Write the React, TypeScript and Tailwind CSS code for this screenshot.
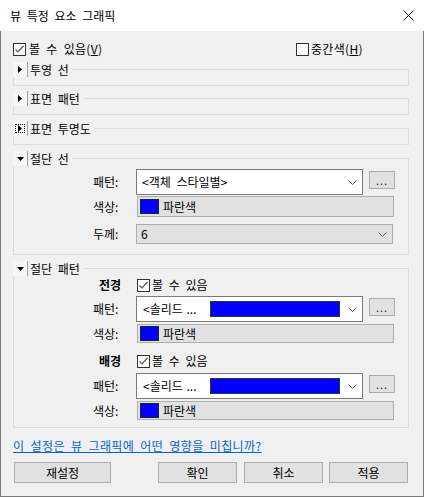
import React from "react";

function Check({ checked }: { checked: boolean }) {
  return (
    <span className="w-[13px] h-[13px] shrink-0 border border-[#333333] bg-white flex items-center justify-center">
      {checked && (
        <svg width="11" height="11" viewBox="0 0 11 11">
          <path d="M1.5 5.5 L4 8 L9.5 2" stroke="#555555" strokeWidth="1.2" fill="none" />
        </svg>
      )}
    </span>
  );
}

function Toggle({ open, focus }: { open: boolean; focus?: boolean }) {
  return (
    <span className="w-[15px] h-[15px] shrink-0 bg-[#f6f6f6] border-r border-[#a0a0a0] flex items-center justify-center relative">
      {focus && <span className="absolute left-[2px] top-[3px] w-[10px] h-[9px] border border-dotted border-black" />}
      {open ? (
        <svg width="7" height="4" viewBox="0 0 7 4">
          <path d="M0 0 L7 0 L3.5 4 Z" fill="#000" />
        </svg>
      ) : (
        <svg width="4" height="7" viewBox="0 0 4 7">
          <path d="M0 0 L4 3.5 L0 7 Z" fill="#000" />
        </svg>
      )}
    </span>
  );
}

function Group({
  title,
  open,
  focus,
  className,
  children,
}: {
  title: string;
  open: boolean;
  focus?: boolean;
  className: string;
  children?: React.ReactNode;
}) {
  return (
    <div className={"relative border border-[#dcdcdc] " + className}>
      <div className="absolute left-[-1px] top-[-8px] flex items-center bg-[#f0f0f0] pr-[3px] h-[15px]">
        <Toggle open={open} focus={focus} />
        <span className="ml-[2px] leading-[15px]">{title}</span>
      </div>
      {children}
    </div>
  );
}

function Chevron() {
  return (
    <svg width="9" height="5" viewBox="0 0 9 5" className="shrink-0">
      <path d="M0.5 0.5 L4.5 4.5 L8.5 0.5" stroke="#606060" strokeWidth="1" fill="none" />
    </svg>
  );
}

function DotsButton() {
  return (
    <div className="ml-[6px] self-start mt-[2px] w-[26px] h-[18px] border border-[#adadad] bg-[#e1e1e1] flex items-center justify-center">
      <span className="text-[11px] leading-none tracking-[1px] text-[#222]">...</span>
    </div>
  );
}

function Swatch() {
  return <span className="w-[19px] h-[15px] border border-[#222] bg-[#0000ff] shrink-0" />;
}

function LabelledColor({ className }: { className: string }) {
  return (
    <div className={"flex items-center " + className}>
      <span className="w-[122px] pl-[79px]">색상:</span>
      <div className="ml-[1px] w-[257px] h-full border border-[#adadad] bg-[#e1e1e1] flex items-center pl-[2px]">
        <Swatch />
        <span className="ml-[4px]">파란색</span>
      </div>
    </div>
  );
}

function SolidSelect() {
  return (
    <div className="flex items-start h-[26px]">
      <span className="w-[122px] pl-[79px] self-center">패턴:</span>
      <div className="w-[227px] h-[26px] bg-white border border-[#7a7a7a] flex items-center pl-[6px] pr-[5px]">
        <span className="w-[67px] [word-spacing:1px]">&lt;솔리드 ...</span>
        <span className="w-[130px] h-[16px] bg-[#0000ff] border border-[#333]" />
        <span className="ml-auto">
          <Chevron />
        </span>
      </div>
      <DotsButton />
    </div>
  );
}

export default function App() {
  return (
    <div className="w-[424px] h-[497px] flex flex-col bg-[#f0f0f0] text-[12px] leading-[16px] text-black [word-spacing:3px] font-['Noto_Sans_CJK_KR','Noto_Sans',sans-serif]">
      <div className="h-[31px] bg-white flex items-center pl-[10px] pr-[10px] shrink-0">
        <span className="text-[12px]">뷰 특정 요소 그래픽</span>
        <svg width="11" height="11" viewBox="0 0 11 11" className="ml-auto mr-[0px]">
          <path d="M0.5 0.5 L10.5 10.5 M10.5 0.5 L0.5 10.5" stroke="#111" strokeWidth="1" />
        </svg>
      </div>
      <div className="flex-1 flex flex-col border-x border-b border-[#7a7a7a] pl-[12px] pr-[14px]">
        <div className="mt-[10px] h-[16px] flex items-center">
          <span className="w-[283px] flex items-center">
            <Check checked />
            <span className="ml-[3px] tracking-[0.3px]">
              볼 수 있음(<span className="underline">V</span>)
            </span>
          </span>
          <span className="flex items-center">
            <Check checked={false} />
            <span className="ml-[2px] tracking-[0.3px]">
              중간색(<span className="underline">H</span>)
            </span>
          </span>
        </div>

        <Group title="투영 선" open={false} className="mt-[12px] h-[17px]" />
        <Group title="표면 패턴" open={false} className="mt-[12px] h-[17px]" />
        <Group title="표면 투명도" open={false} focus className="mt-[13px] h-[17px]" />

        <Group title="절단 선" open className="mt-[13px] h-[97px]">
          <div className="pt-[10px] flex flex-col">
            <div className="flex items-start h-[26px]">
              <span className="w-[122px] pl-[79px] self-center">패턴:</span>
              <div className="w-[227px] h-[26px] bg-white border border-[#7a7a7a] flex items-center pl-[5px] pr-[5px]">
                <span className="flex-1">&lt;객체 스타일별&gt;</span>
                <Chevron />
              </div>
              <DotsButton />
            </div>
            <LabelledColor className="mt-[1px] h-[21px]" />
            <div className="mt-[7px] h-[20px] flex items-center">
              <span className="w-[122px] pl-[79px]">두께:</span>
              <div className="w-[257px] h-full border border-[#adadad] bg-[#e1e1e1] flex items-center pl-[4px] pr-[5px]">
                <span className="flex-1">6</span>
                <Chevron />
              </div>
            </div>
          </div>
        </Group>

        <Group title="절단 패턴" open className="mt-[13px] h-[160px]">
          <div className="pt-[8px] flex flex-col">
            <div className="h-[16px] flex items-center">
              <span className="w-[122px] pl-[85px] font-bold">전경</span>
              <span className="ml-[1px]">
                <Check checked />
              </span>
              <span className="ml-[2px]">볼 수 있음</span>
            </div>
            <div className="mt-[3px]">
              <SolidSelect />
            </div>
            <LabelledColor className="mt-[2px] h-[19px]" />
            <div className="mt-[10px] h-[16px] flex items-center">
              <span className="w-[122px] pl-[85px] font-bold">배경</span>
              <span className="ml-[1px]">
                <Check checked />
              </span>
              <span className="ml-[2px]">볼 수 있음</span>
            </div>
            <div className="mt-[4px]">
              <SolidSelect />
            </div>
            <LabelledColor className="mt-[2px] h-[19px]" />
          </div>
        </Group>

        <div className="mt-[10px] h-[16px] flex items-center">
          <span className="text-[#0066cc] underline tracking-[0.4px]">이 설정은 뷰 그래픽에 어떤 영향을 미칩니까?</span>
        </div>

        <div className="mt-[8px] h-[21px] flex">
          <div className="ml-[1px] w-[97px] h-full border border-[#adadad] bg-[#e1e1e1] flex items-center justify-center">재설정</div>
          <div className="ml-auto w-[79px] h-full border border-[#adadad] bg-[#e1e1e1] flex items-center justify-center">확인</div>
          <div className="ml-[7px] w-[79px] h-full border border-[#adadad] bg-[#e1e1e1] flex items-center justify-center">취소</div>
          <div className="ml-[6px] mr-[1px] w-[79px] h-full border border-[#adadad] bg-[#e1e1e1] flex items-center justify-center">적용</div>
        </div>
      </div>
    </div>
  );
}
